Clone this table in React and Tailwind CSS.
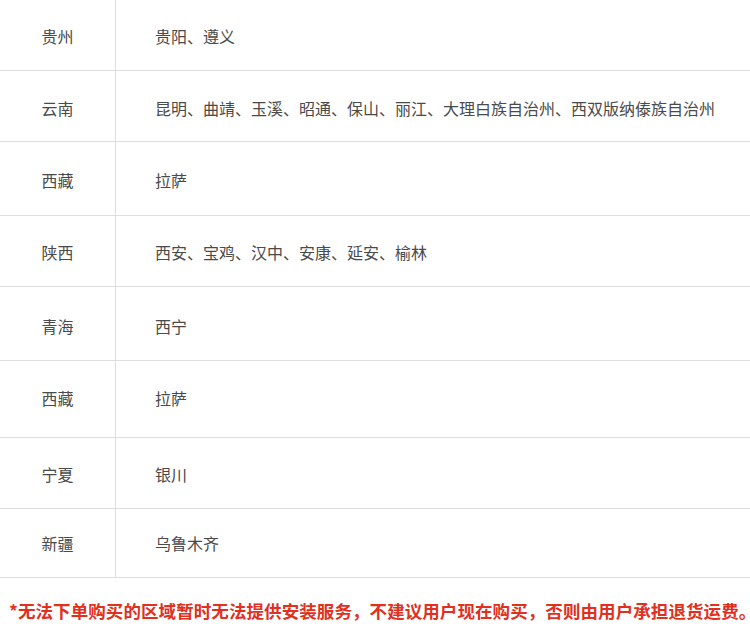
import React from "react";

const rows = [
  { p: "贵州", c: "贵阳、遵义", h: "h-[71px]", pt: "pt-[25px]" },
  { p: "云南", c: "昆明、曲靖、玉溪、昭通、保山、丽江、大理白族自治州、西双版纳傣族自治州", h: "h-[71px]", pt: "pt-[26px]" },
  { p: "西藏", c: "拉萨", h: "h-[74px]", pt: "pt-[27px]" },
  { p: "陕西", c: "西安、宝鸡、汉中、安康、延安、榆林", h: "h-[71px]", pt: "pt-[25px]" },
  { p: "青海", c: "西宁", h: "h-[74px]", pt: "pt-[28px]" },
  { p: "西藏", c: "拉萨", h: "h-[77px]", pt: "pt-[26px]" },
  { p: "宁夏", c: "银川", h: "h-[71px]", pt: "pt-[25px]" },
  { p: "新疆", c: "乌鲁木齐", h: "h-[69px]", pt: "pt-[23px]" },
];

export default function App() {
  return (
    <div
      className="w-[750px] h-[639px] bg-white overflow-hidden"
      style={{ fontFamily: '"Noto Sans CJK SC", "Noto Sans", sans-serif' }}
    >
      <div className="flex flex-col">
        {rows.map((r, i) => (
          <div key={i} className={`flex ${r.h} border-b border-[#dedede]`}>
            <div
              className={`w-[116px] shrink-0 border-r border-[#dedede] text-center text-[16px] leading-[22px] text-[#4a4a4a] ${r.pt}`}
            >
              {r.p}
            </div>
            <div
              className={`flex-1 pl-[39px] text-[16px] leading-[22px] text-[#4a4a4a] whitespace-nowrap ${r.pt}`}
            >
              {r.c}
            </div>
          </div>
        ))}
      </div>
      <div className="pt-[20px] pl-[9px] text-[17.5px] leading-[26px] tracking-[0.08px] font-bold text-[#e0301e] whitespace-nowrap">
        *无法下单购买的区域暂时无法提供安装服务，不建议用户现在购买，否则由用户承担退货运费。
      </div>
    </div>
  );
}
